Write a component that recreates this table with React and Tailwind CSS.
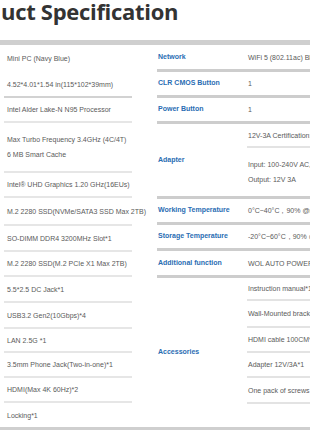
const leftRows = [
  { h: 27, lines: ['Mini PC (Navy Blue)'], line: 'none' },
  { h: 26, lines: ['4.52*4.01*1.54 in(115*102*39mm)'], line: 'dark' },
  { h: 25, lines: ['Intel Alder Lake-N N95 Processor'] },
  { h: 50, lines: ['Max Turbo Frequency 3.4GHz  (4C/4T)', '6 MB Smart Cache'] },
  { h: 25, lines: ['Intel® UHD Graphics 1.20 GHz(16EUs)'] },
  { h: 28, lines: ['M.2  2280 SSD(NVMe/SATA3 SSD Max 2TB)'] },
  { h: 26, lines: ['SO-DIMM DDR4 3200MHz Slot*1'] },
  { h: 25, lines: ['M.2 2280 SSD(M.2 PCIe X1 Max 2TB)'] },
  { h: 26, lines: ['5.5*2.5 DC Jack*1'] },
  { h: 26, lines: ['USB3.2 Gen2(10Gbps)*4'] },
  { h: 24, lines: ['LAN 2.5G *1'] },
  { h: 25, lines: ['3.5mm Phone Jack(Two-in-one)*1'] },
  { h: 25, lines: ['HDMI(Max 4K 60Hz)*2'] },
  { h: 24, lines: ['Locking*1'], line: 'none' },
];

const rightRows = [
  { h: 27, label: 'Network', values: [{ h: 27, lines: ['WiFi 5 (802.11ac)  Bluetooth 4.2'] }] },
  { h: 26, label: 'CLR CMOS Button', values: [{ h: 26, lines: ['1'] }] },
  { h: 26, label: 'Power Button', values: [{ h: 26, lines: ['1'] }] },
  {
    h: 75,
    label: 'Adapter',
    values: [
      { h: 24, lines: ['12V-3A  Certification: CE FCC'] },
      { h: 51, lines: ['Input: 100-240V AC, 50/60Hz', 'Output: 12V 3A'] },
    ],
  },
  { h: 26, label: 'Working Temperature', values: [{ h: 26, lines: ['0°C~40°C，90% @non-condensing'] }] },
  { h: 26, label: 'Storage Temperature', values: [{ h: 26, lines: ['-20°C~60°C，90% @non-condensing'] }] },
  { h: 27, label: 'Additional function', values: [{ h: 27, lines: ['WOL   AUTO POWER ON   PXE'] }] },
  {
    h: 149,
    label: 'Accessories',
    last: true,
    values: [
      { h: 23, lines: ['Instruction manual*1'] },
      { h: 27, lines: ['Wall-Mounted bracket*1'] },
      { h: 25, lines: ['HDMI cable 100CM*1'] },
      { h: 25, lines: ['Adapter 12V/3A*1'] },
      { h: 26, lines: ['One pack of screws'] },
      { h: 23, lines: [] },
    ],
  },
];

const TextBlock = ({ lines }) => (
  <div className="flex flex-col gap-[6px]">
    {lines.map((t) => (
      <span key={t} className="whitespace-nowrap leading-[9px]">{t}</span>
    ))}
  </div>
);

const LeftRow = ({ row }) => {
  const border =
    row.line === 'none'
      ? ''
      : row.line === 'dark'
        ? 'border-b-2 border-[#d2d2d2]'
        : 'border-b-2 border-[#e6e6e6]';
  return (
    <div style={{ height: row.h }} className={`ml-[4px] w-[128px] pl-[3px] flex items-center ${border}`}>
      <TextBlock lines={row.lines} />
    </div>
  );
};

const RightRow = ({ row }) => (
  <div
    style={{ height: row.h }}
    className={`flex ${row.last ? '' : 'border-b-[3px] border-[#cdcdcd]'}`}
  >
    <div className="w-[90px] shrink-0 pl-[1px] flex items-center font-bold text-[#2a6db3]">
      <span className="whitespace-nowrap">{row.label}</span>
    </div>
    <div className="flex-1 flex flex-col">
      {row.values.map((v, i) => (
        <div
          key={i}
          style={{ height: v.h - (i === row.values.length - 1 && !row.last ? 3 : 0) }}
          className={`pl-[1px] flex items-center ${
            i < row.values.length - 1 ? 'border-b-2 border-[#e3e3e3]' : ''
          }`}
        >
          <TextBlock lines={v.lines} />
        </div>
      ))}
    </div>
  </div>
);

export default function App() {
  return (
    <div className="w-[310px] h-[430px] overflow-hidden bg-white flex flex-col">
      <div className="h-[40px] shrink-0 pl-[1px]">
        <h1 className="text-[22px] leading-[22px] font-bold text-[#333333] whitespace-nowrap mt-[0px] tracking-[-0.3px] [font-family:'Open_Sans',sans-serif]">
          uct Specification
        </h1>
      </div>
      <div className="h-[5px] shrink-0 bg-[#cfcfcf]" />
      <div className="flex shrink-0 h-[382px] text-[7px] text-[#5a5a5a] [font-family:'Liberation_Sans',Arial,sans-serif]">
        <div className="w-[137px] shrink-0 flex flex-col">
          {leftRows.map((r, i) => (
            <LeftRow key={i} row={r} />
          ))}
        </div>
        <div className="ml-[20px] w-[260px] shrink-0 flex flex-col">
          {rightRows.map((r, i) => (
            <RightRow key={i} row={r} />
          ))}
        </div>
      </div>
      <div className="h-[4px] shrink-0 bg-[#cfcfcf]" />
    </div>
  );
}
